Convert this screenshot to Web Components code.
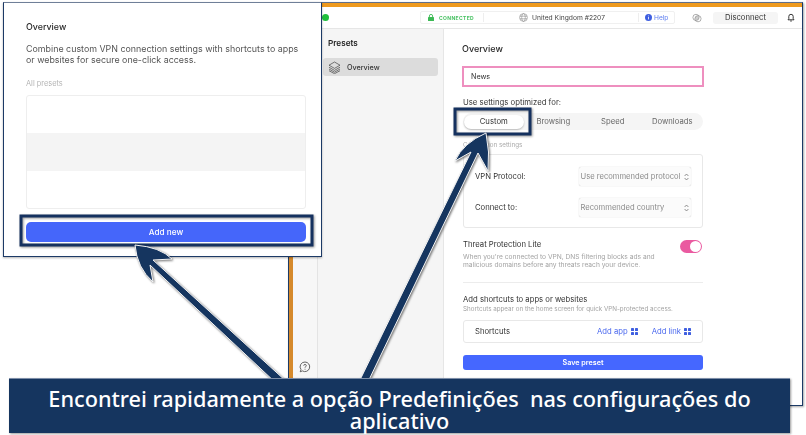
<!DOCTYPE html>
<html lang="pt">
<head>
<meta charset="utf-8">
<title>Presets</title>
<style>
html, body { margin: 0; background: #fff; }
body { width: 806px; height: 435px; overflow: hidden; position: relative; font-family: Inter, "Liberation Sans", sans-serif; }
</style>
</head>
<body>
<vpn-window>
  <vpn-header slot="header"></vpn-header>
  <vpn-sidebar slot="sidebar"></vpn-sidebar>
  <preset-form slot="main"></preset-form>
</vpn-window>
<overview-card></overview-card>
<callout-marks></callout-marks>
<caption-banner>Encontrei rapidamente a opção Predefinições  nas configurações do aplicativo</caption-banner>

<script>
const windowTemplate = `
<style>
:host {
    display: block;
    box-sizing: border-box;
    width: 515px;
    height: 404px;
    margin: 2px 0 0 288px;
    border: 1px solid #1c3a66;
    border-top-color: #5d6f8c;
    box-shadow: 1px 1px 2px rgba(0,0,0,.35);
    background: #fff;
    filter: blur(.3px);
}
.frame {
    display: grid;
    grid-template-columns: 25px 126px 1fr;
    grid-template-rows: 22px 1fr;
    height: calc(100% - 4px);
    border-top: 4px solid #ee9a1f;
    border-left: 4px solid #d68a2c;
}
.top { grid-column: 1 / 4; }
.rail {
    background: #f7f7f7;
    border-right: 1px solid #e4e4e4;
    display: flex;
    flex-direction: column;
    justify-content: flex-end;
    align-items: center;
    padding-bottom: 32px;
}
</style>
<div class="frame">
    <div class="top"><slot name="header"></slot></div>
    <div class="rail">
        <svg width="12" height="12" viewBox="0 0 12 12" fill="none" stroke="#555" stroke-width=".9">
            <path d="M6 1a4.8 4.8 0 1 1-2.6 8.9L1.2 10.8l.8-2.2A4.8 4.8 0 0 1 6 1z"/>
            <path d="M4.7 4.7c0-1.7 2.6-1.7 2.6 0 0 1-1.3 1-1.3 2M6 7.8v.8"/>
        </svg>
    </div>
    <slot name="sidebar"></slot>
    <slot name="main"></slot>
</div>
`
class VpnWindow extends HTMLElement {
    constructor() {
        super()
        this.attachShadow({mode: 'open'}).innerHTML = windowTemplate
    }
}
customElements.define('vpn-window', VpnWindow)

const headerTemplate = `
<style>
:host {
    display: flex;
    align-items: center;
    box-sizing: border-box;
    height: 22px;
    border-bottom: 1px solid #e6e6e6;
    background: #fff;
    color: #444;
    font-size: 8px;
}
.dot { width: 7px; height: 7px; border-radius: 50%; background: #1fbf3c; margin-left: 29px; }
.status {
    display: flex;
    align-items: center;
    box-sizing: border-box;
    width: 255px;
    height: 13px;
    margin-left: 91px;
    border: 1px solid #f0f0f0;
    border-radius: 2px;
}
.lock { margin-left: 7px; }
.conn { margin-left: 5px; width: 44px; color: #46c061; font-size: 5px; font-weight: 700; letter-spacing: .35px; }
.sep { width: 1px; height: 9px; background: #eee; }
.globe { margin-left: 35px; }
.place { margin-left: 4px; width: 106px; white-space: nowrap; font-size: 6.7px; }
.info { margin-left: 6px; }
.help { margin-left: 2px; color: #5c7cf0; font-size: 6.6px; }
.print { margin-left: 17px; }
.off {
    width: 65px;
    height: 12px;
    margin-left: 11px;
    border-radius: 3px;
    background: #f5f5f5;
    color: #333;
    font-size: 7.7px;
    line-height: 12px;
    text-align: center;
}
.bell { margin-left: 9px; }
</style>
<span class="dot"></span>
<div class="status">
    <svg class="lock" width="6" height="7" viewBox="0 0 6 7"><rect y="3" width="6" height="4" rx=".6" fill="#3cba55"/><path d="M1.4 3V2a1.6 1.6 0 0 1 3.2 0v1" fill="none" stroke="#3cba55" stroke-width=".9"/></svg>
    <span class="conn">CONNECTED</span>
    <span class="sep"></span>
    <svg class="globe" width="9" height="9" viewBox="0 0 9 9" fill="none" stroke="#8a8a8a" stroke-width=".6"><circle cx="4.5" cy="4.5" r="3.9"/><ellipse cx="4.5" cy="4.5" rx="1.8" ry="3.9"/><path d="M.8 3.2h7.4M.8 5.8h7.4"/></svg>
    <span class="place">United Kingdom #2207</span>
    <span class="sep"></span>
    <svg class="info" width="7" height="7" viewBox="0 0 7 7"><circle cx="3.5" cy="3.5" r="3.5" fill="#3f5fe0"/><path d="M3.5 3v2.4M3.5 1.6v.7" stroke="#fff" stroke-width=".8"/></svg>
    <span class="help">Help</span>
</div>
<svg class="print" width="10" height="10" viewBox="0 0 10 10" fill="none" stroke="#8f8f8f" stroke-width=".7"><circle cx="4" cy="4.4" r="3.1"/><circle cx="6" cy="5.7" r="3.1"/><circle cx="5" cy="5" r="1.3"/></svg>
<span class="off">Disconnect</span>
<svg class="bell" width="8" height="9" viewBox="0 0 8 9" fill="none" stroke="#222" stroke-width=".9"><path d="M1 6.8h6L6.2 5.6V3.5a2.2 2.2 0 0 0-4.4 0v2.1z"/><path d="M3.2 8h1.6"/></svg>
`
class VpnHeader extends HTMLElement {
    constructor() {
        super()
        this.attachShadow({mode: 'open'}).innerHTML = headerTemplate
    }
}
customElements.define('vpn-header', VpnHeader)

const sidebarTemplate = `
<style>
:host {
    display: block;
    box-sizing: border-box;
    height: 100%;
    padding: 8px 5px 0 5px;
    background: #f5f5f5;
    border-right: 1px solid #e6e6e6;
    color: #222;
}
h2 { margin: 0 0 9px 5px; font-size: 8.2px; line-height: 12px; font-weight: 600; }
.item {
    display: flex;
    align-items: center;
    gap: 6px;
    height: 18px;
    padding-left: 5px;
    border-radius: 3px;
    background: #dcdcdc;
    font-size: 7.2px;
    font-weight: 500;
    color: #333;
}
</style>
<h2>Presets</h2>
<div class="item">
    <svg width="13" height="13" viewBox="0 0 13 13" fill="none" stroke="#444" stroke-width=".7" stroke-linejoin="round">
        <path d="M6.5 1 12 4.2 6.5 7.4 1 4.2z"/>
        <path d="M1 6.2l5.5 3.2L12 6.2M1 8l5.5 3.2L12 8M1 9.7l5.5 3L12 9.7"/>
    </svg>
    <span>Overview</span>
</div>
`
class VpnSidebar extends HTMLElement {
    constructor() {
        super()
        this.attachShadow({mode: 'open'}).innerHTML = sidebarTemplate
    }
}
customElements.define('vpn-sidebar', VpnSidebar)

const segmentsTemplate = `
<style>
:host {
    display: grid;
    grid-template-columns: repeat(4, 1fr);
    align-items: center;
    box-sizing: border-box;
    height: 17px;
    margin-top: 5px;
    padding: 0 1px;
    border-radius: 9px;
    background: #f5f5f5;
    color: #666;
    font-size: 7.7px;
    text-align: center;
}
.on {
    height: 14px;
    line-height: 14px;
    border-radius: 7px;
    background: #fff;
    box-shadow: 0 1px 2px rgba(0,0,0,.25);
    color: #333;
}
</style>
<span class="on">Custom</span><span>Browsing</span><span>Speed</span><span>Downloads</span>
`
class SegmentControl extends HTMLElement {
    constructor() {
        super()
        this.attachShadow({mode: 'open'}).innerHTML = segmentsTemplate
    }
}
customElements.define('segment-control', SegmentControl)

const selectTemplate = `
<style>
:host {
    display: flex;
    align-items: center;
    justify-content: space-between;
    box-sizing: border-box;
    height: 19px;
    padding: 0 2px 0 1.5px;
    border-radius: 2px;
    background: #fbfbfb;
    box-shadow: 0 0 1px rgba(0,0,0,.3);
    color: #8b8b8b;
    font-size: 7.6px;
    white-space: nowrap;
}
</style>
<span><slot></slot></span>
<svg width="5" height="8" viewBox="0 0 5 8" fill="none" stroke="#666" stroke-width=".7"><path d="M.6 3 2.5 1l1.9 2M.6 5l1.9 2 1.9-2"/></svg>
`
class SelectField extends HTMLElement {
    constructor() {
        super()
        this.attachShadow({mode: 'open'}).innerHTML = selectTemplate
    }
}
customElements.define('select-field', SelectField)

const toggleTemplate = `
<style>
:host {
    display: block;
    box-sizing: border-box;
    width: 22px;
    height: 13px;
    padding: 1px 1px 1px 10px;
    border-radius: 7px;
    background: #ea5aa0;
}
span { display: block; width: 11px; height: 11px; border-radius: 50%; background: #fff; }
</style>
<span></span>
`
class ToggleSwitch extends HTMLElement {
    constructor() {
        super()
        this.attachShadow({mode: 'open'}).innerHTML = toggleTemplate
    }
}
customElements.define('toggle-switch', ToggleSwitch)

const gridIcon = `<svg width="7" height="7" viewBox="0 0 7 7" fill="#3f5fe0"><rect width="3" height="3" rx=".6"/><rect x="4" width="3" height="3" rx=".6"/><rect y="4" width="3" height="3" rx=".6"/><rect x="4" y="4" width="3" height="3" rx=".6"/></svg>`

const formTemplate = `
<style>
:host {
    display: block;
    box-sizing: border-box;
    height: 100%;
    padding: 14px 0 0 19px;
    background: #fff;
    color: #333;
}
.col { width: 240px; }
h2 { margin: 0 0 0 -1px; font-size: 9px; line-height: 11px; font-weight: 500; color: #2b2b2b; }
.name {
    box-sizing: border-box;
    width: 242px;
    height: 21px;
    margin: 12px 0 0 -1px;
    padding-left: 7px;
    border: 2px solid #ee8fbf;
    font-size: 7.2px;
    line-height: 17px;
    color: #333;
}
.label { margin-top: 10px; font-size: 7.75px; line-height: 11px; }
.hint { margin-top: 11px; font-size: 6.3px; line-height: 9px; color: #aaa; }
.box {
    box-sizing: border-box;
    margin-top: 4px;
    border: 1px solid #e8e8e8;
    border-radius: 3px;
    font-size: 7.7px;
}
.settings {
    display: grid;
    grid-template-columns: 1fr 112px;
    grid-template-rows: 19px 19px;
    row-gap: 12px;
    align-items: center;
    height: 74px;
    padding: 12px 11px 0 11px;
}
.threat { display: flex; justify-content: space-between; margin-top: 11px; }
.title { font-size: 7.7px; line-height: 12px; }
.fine { margin-top: 2px; font-size: 6.65px; line-height: 8px; color: #a3a3a3; white-space: nowrap; }
toggle-switch { margin: 1px 1px 0 0; }
hr { margin: 13px 0 0; border: 0; border-top: 1px solid #ececec; }
.add { margin-top: 11px; line-height: 11px; }
.under { margin-top: 0; font-size: 6.25px; line-height: 9px; }
.shortcuts {
    display: flex;
    align-items: center;
    height: 23px;
    margin-top: 6px;
    padding: 0 11px;
}
.link { display: flex; align-items: center; gap: 3px; color: #4a68ee; }
.first { margin-left: auto; }
.second { margin-left: 14px; }
.save {
    height: 15px;
    margin-top: 12px;
    border-radius: 3px;
    background: #4567ff;
    color: #fff;
    font-size: 7.2px;
    font-weight: 600;
    line-height: 15px;
    text-align: center;
}
</style>
<div class="col">
    <h2>Overview</h2>
    <div class="name">News</div>
    <div class="label">Use settings optimized for:</div>
    <segment-control></segment-control>
    <div class="hint">Connection settings</div>
    <div class="box settings">
        <span>VPN Protocol:</span>
        <select-field>Use recommended protocol</select-field>
        <span>Connect to:</span>
        <select-field>Recommended country</select-field>
    </div>
    <div class="threat">
        <div>
            <div class="title">Threat Protection Lite</div>
            <div class="fine">When you're connected to VPN, DNS filtering blocks ads and<br>malicious domains before any threats reach your device.</div>
        </div>
        <toggle-switch></toggle-switch>
    </div>
    <hr>
    <div class="title add">Add shortcuts to apps or websites</div>
    <div class="fine under">Shortcuts appear on the home screen for quick VPN-protected access.</div>
    <div class="box shortcuts">
        <span>Shortcuts</span>
        <span class="link first">Add app ${gridIcon}</span>
        <span class="link second">Add link ${gridIcon}</span>
    </div>
    <div class="save">Save preset</div>
</div>
`
class PresetForm extends HTMLElement {
    constructor() {
        super()
        this.attachShadow({mode: 'open'}).innerHTML = formTemplate
    }
}
customElements.define('preset-form', PresetForm)

const cardTemplate = `
<style>
:host {
    position: absolute;
    left: 3px;
    top: 2px;
    box-sizing: border-box;
    width: 319px;
    height: 255px;
    padding: 18px 15px 0 22px;
    background: #fff;
    border: 1px solid #1c3a66;
    border-top-color: #6f7f98;
    box-shadow: 0 1px 2px rgba(0,0,0,.3);
    color: #444;
    filter: blur(.3px);
}
h2 { margin: 0; font-size: 8.9px; line-height: 11px; font-weight: 500; color: #2b2b2b; }
p { margin: 11px 0 0; font-size: 8.9px; line-height: 11.3px; white-space: nowrap; color: #555; }
.small { margin-top: 13px; font-size: 7.4px; line-height: 9px; color: #b5b5b5; }
.list {
    box-sizing: border-box;
    height: 114px;
    margin-top: 7px;
    border: 1px solid #eee;
    border-radius: 3px;
    display: flex;
    flex-direction: column;
    justify-content: center;
}
.list div { height: 38px; background: #f4f4f4; }
.add {
    height: 20px;
    margin-top: 13px;
    border-radius: 5px;
    background: #4566fa;
    color: #fff;
    font-size: 8.2px;
    font-weight: 500;
    line-height: 20px;
    text-align: center;
}
</style>
<h2>Overview</h2>
<p>Combine custom VPN connection settings with shortcuts to apps<br>or websites for secure one-click access.</p>
<div class="small">All presets</div>
<div class="list"><div></div></div>
<div class="add">Add new</div>
`
class OverviewCard extends HTMLElement {
    constructor() {
        super()
        this.attachShadow({mode: 'open'}).innerHTML = cardTemplate
    }
}
customElements.define('overview-card', OverviewCard)

const marksTemplate = `
<style>
:host { position: absolute; left: 0; top: 0; width: 806px; height: 435px; pointer-events: none; }
svg { display: block; }
.frame { fill: none; stroke: #15315f; stroke-width: 3; filter: drop-shadow(1px 1px 1px rgba(0,0,0,.4)); }
.arrow { fill: #15355f; stroke: #f4f4f4; stroke-width: 1; stroke-linejoin: round; filter: drop-shadow(1px 1px 1px rgba(0,0,0,.55)); }
</style>
<svg width="806" height="435" viewBox="0 0 806 435">
    <rect class="frame" x="21" y="216" width="291" height="29"/>
    <rect class="frame" x="455" y="109" width="75" height="25"/>
    <path class="arrow" d="M135 245 Q160 247 172 259 L153 260 L287 382 L277 384 L150 265 L153 282 Q137 268 135 245z"/>
    <path class="arrow" d="M486 133 Q490 152 488 171 L478 153 L367 384 L358 384 L471 152 L455 161 Q463 143 486 133z"/>
</svg>
`
class CalloutMarks extends HTMLElement {
    constructor() {
        super()
        this.attachShadow({mode: 'open'}).innerHTML = marksTemplate
    }
}
customElements.define('callout-marks', CalloutMarks)

const bannerTemplate = `
<style>
:host {
    position: absolute;
    left: 9px;
    top: 378px;
    box-sizing: border-box;
    width: 781px;
    height: 55px;
    padding: 9px 30px 0;
    background: #15355f;
    border-top: 1px solid #7d8ea8;
    box-shadow: 1px 1px 2px rgba(0,0,0,.4);
    color: #fff;
    font-family: "Noto Sans", "Open Sans", sans-serif;
    font-size: 21.7px;
    font-weight: 500;
    line-height: 22px;
    text-align: center;
}
.line { white-space: pre-wrap; }
</style>
<div class="line"><slot></slot></div>
`
class CaptionBanner extends HTMLElement {
    constructor() {
        super()
        this.attachShadow({mode: 'open'}).innerHTML = bannerTemplate
    }
}
customElements.define('caption-banner', CaptionBanner)
</script>
</body>
</html>
